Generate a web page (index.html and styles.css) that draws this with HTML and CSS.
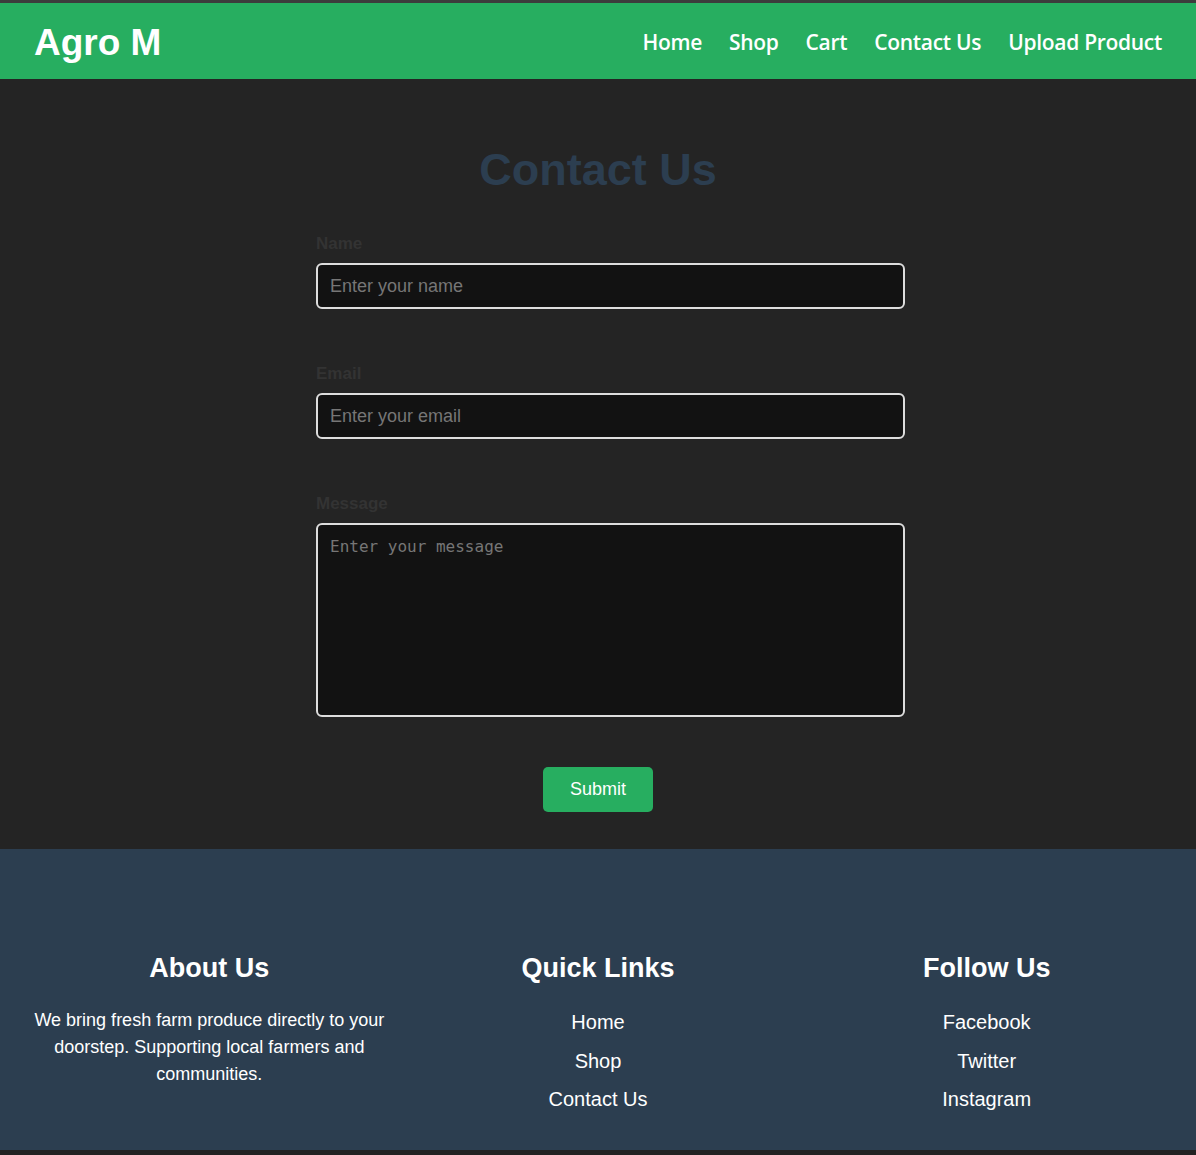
FILE: index.html
```html
<!DOCTYPE html>
<html lang="en">
<head>
<meta charset="UTF-8">
<title>Agro M - Contact Us</title>
<link rel="stylesheet" href="styles.css">
</head>
<body>
<header class="site-header">
  <div class="logo">Agro M</div>
  <nav class="main-nav">
    <a href="#">Home</a>
    <a href="#">Shop</a>
    <a href="#">Cart</a>
    <a href="#">Contact Us</a>
    <a href="#">Upload Product</a>
  </nav>
</header>

<main class="contact">
  <h1 class="contact-title">Contact Us</h1>
  <form class="contact-form">
    <div class="form-group">
      <label for="name">Name</label>
      <input id="name" type="text" placeholder="Enter your name">
    </div>
    <div class="form-group">
      <label for="email">Email</label>
      <input id="email" type="email" placeholder="Enter your email">
    </div>
    <div class="form-group form-group-last">
      <label for="message">Message</label>
      <textarea id="message" placeholder="Enter your message"></textarea>
    </div>
    <button type="button" class="submit-btn">Submit</button>
  </form>
</main>

<footer class="site-footer">
  <div class="footer-col">
    <h3>About Us</h3>
    <p>We bring fresh farm produce directly to your doorstep. Supporting local farmers and communities.</p>
  </div>
  <div class="footer-col">
    <h3>Quick Links</h3>
    <ul>
      <li><a href="#">Home</a></li>
      <li><a href="#">Shop</a></li>
      <li><a href="#">Contact Us</a></li>
    </ul>
  </div>
  <div class="footer-col">
    <h3>Follow Us</h3>
    <ul>
      <li><a href="#">Facebook</a></li>
      <li><a href="#">Twitter</a></li>
      <li><a href="#">Instagram</a></li>
    </ul>
  </div>
</footer>
</body>
</html>
```

FILE: styles.css
```css
* {
  box-sizing: border-box;
}

html, body {
  margin: 0;
  padding: 0;
}

body {
  background: #222222;
  border-top: 3px solid #3c3c3c;
  font-family: "Liberation Sans", Arial, sans-serif;
  color: #ffffff;
  padding-bottom: 5px;
}

.site-header {
  background: #27ae60;
  height: 76px;
  display: flex;
  align-items: center;
  justify-content: space-between;
  padding: 0 34px 0 34px;
}

.logo {
  font-family: "Liberation Sans", Arial, sans-serif;
  font-weight: bold;
  font-size: 37px;
  color: #ffffff;
  padding-top: 3px;
}

.main-nav {
  display: flex;
  gap: 27px;
  padding-top: 2px;
}

.main-nav a {
  font-family: "Open Sans", "Noto Sans", sans-serif;
  font-weight: 600;
  font-size: 21px;
  color: #ffffff;
  text-decoration: none;
  letter-spacing: -0.3px;
}

.contact {
  background: #242424;
  padding: 40px 0 37px;
}

.contact-title {
  margin: 25px 0 38px;
  text-align: center;
  font-size: 45px;
  font-weight: bold;
  color: #2c3e50;
  line-height: 1.15;
}

.contact-form {
  width: 564px;
  margin: 0 auto;
  display: flex;
  flex-direction: column;
}

.form-group {
  margin-bottom: 54.5px;
}

.form-group-last {
  margin-bottom: 50px;
}

.form-group label {
  display: block;
  font-size: 17px;
  font-weight: bold;
  color: #333333;
  line-height: 19.5px;
  margin-bottom: 10px;
}

.form-group input,
.form-group textarea {
  display: block;
  width: 589px;
  background: #121212;
  border: 2px solid #dddddd;
  border-radius: 6px;
  color: #ffffff;
  outline: none;
}

.form-group input {
  height: 46px;
  padding: 0 12px;
  font-family: "Liberation Sans", Arial, sans-serif;
  font-size: 18px;
}

.form-group textarea {
  height: 194px;
  padding: 12px;
  font-family: "DejaVu Sans Mono", monospace;
  font-size: 16px;
  resize: none;
}

.form-group input::placeholder,
.form-group textarea::placeholder {
  color: #767676;
}

.submit-btn {
  align-self: center;
  background: #27ae60;
  color: #ffffff;
  border: none;
  border-radius: 5px;
  padding: 12px 27px;
  font-family: "Liberation Sans", Arial, sans-serif;
  font-size: 18px;
  line-height: 21px;
  cursor: pointer;
}

.site-footer {
  background: #2c3e50;
  display: flex;
  gap: 30px;
  padding: 104px 30px 36px;
}

.footer-col {
  flex: 1;
  text-align: center;
}

.footer-col h3 {
  margin: 0 0 23px;
  font-size: 27px;
  line-height: 31px;
  font-weight: bold;
  color: #ffffff;
}

.footer-col p {
  margin: 0;
  font-size: 18px;
  line-height: 27px;
  color: #ffffff;
}

.footer-col ul {
  list-style: none;
  margin: 0;
  padding: 0;
  display: flex;
  flex-direction: column;
  gap: 8.5px;
}

.footer-col li {
  font-size: 20px;
  line-height: 30px;
}

.footer-col a {
  color: #ffffff;
  text-decoration: none;
}
```
